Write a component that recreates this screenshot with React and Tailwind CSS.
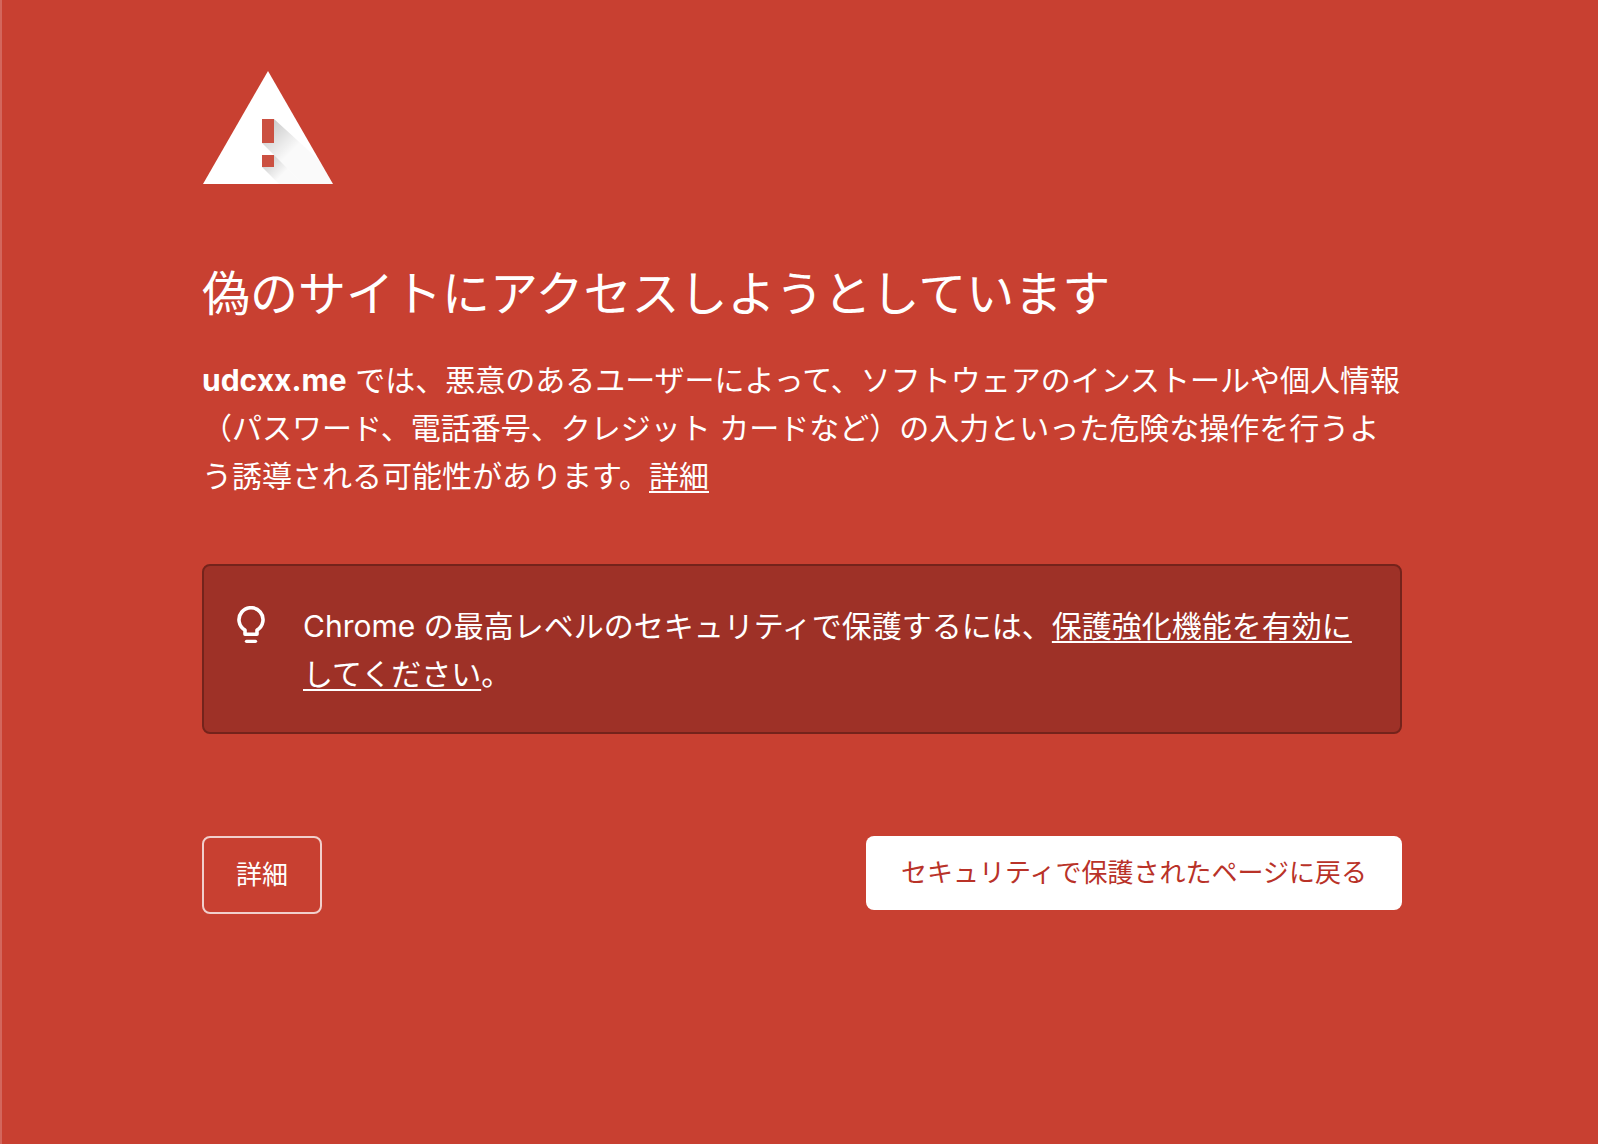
const FONT = { fontFamily: 'Inter, "Noto Sans CJK JP", sans-serif' };

function WarningIcon() {
  return (
    <svg viewBox="0 0 132 113" className="block w-[132px]" aria-hidden="true">
      <defs>
        <linearGradient id="upper-shade" gradientUnits="userSpaceOnUse" x1="64" y1="58" x2="88" y2="82">
          <stop offset="0" stopColor="#000" stopOpacity="0.2" />
          <stop offset="1" stopColor="#000" stopOpacity="0.02" />
        </linearGradient>
        <linearGradient id="lower-shade" gradientUnits="userSpaceOnUse" x1="64" y1="88" x2="80" y2="104">
          <stop offset="0" stopColor="#000" stopOpacity="0.2" />
          <stop offset="1" stopColor="#000" stopOpacity="0.02" />
        </linearGradient>
      </defs>
      <path d="M66 0 131 113H1z" fill="#fff" />
      <path d="M72 48 117 89 131 113H101L60 72 72 72z" fill="url(#upper-shade)" />
      <path d="M72 84 101 113H77L60 96 72 96z" fill="url(#lower-shade)" />
      <path d="M60 48h12v24H60zM60 84h12v12H60z" fill="#cb5041" />
    </svg>
  );
}

function BulbIcon() {
  return (
    <svg viewBox="0 0 28 38" className="mt-1 block w-7 shrink-0 self-start" fill="none" stroke="#fff" strokeWidth="3.6" aria-hidden="true">
      <path d="M8 28.200V24.100a12 12 0 1 1 12 0v4.100z" strokeLinejoin="round" />
      <path d="M9.500 35.300h9" strokeWidth="3.300" strokeLinecap="round" />
    </svg>
  );
}

export default function App() {
  return (
    <main lang="ja" style={FONT} className="min-h-screen border-l-2 border-[#d3665c] bg-[#c84031] pt-[71px] pb-16 pl-1 text-white">
      <div className="mx-auto max-w-[1200px]">
        <WarningIcon />
        <h1 className="mt-[74px] text-[48px] leading-[72px]">偽のサイトにアクセスしようとしています</h1>
        <p className="mt-[26px] text-[30px] leading-[48px]">
          <strong>udcxx.me</strong> では、悪意のあるユーザーによって、ソフトウェアのインストールや個人情報（パスワード、電話番号、クレジット カードなど）の入力といった危険な操作を行うよう誘導される可能性があります。<a href="#details" className="underline decoration-2 underline-offset-4">詳細</a>
        </p>
        <section className="mt-16 flex gap-[38px] rounded-lg border-2 border-[#74231b] bg-[#9e3127] pt-9 pr-8 pb-[34px] pl-[33px]">
          <BulbIcon />
          <p className="text-[30px] leading-[48px]">
            Chrome の最高レベルのセキュリティで保護するには、<a href="#protection" className="underline decoration-2 underline-offset-4">保護強化機能を有効にしてください</a>。
          </p>
        </section>
        <div className="mt-[102px] flex items-start justify-between">
          <button type="button" className="rounded-lg border-2 border-[#f1cfcc] px-8 py-4 text-[26px] leading-[42px]">詳細</button>
          <button type="button" className="rounded-lg bg-white px-[35px] py-4 text-[26px] leading-[42px] text-[#b93228]">セキュリティで保護されたページに戻る</button>
        </div>
      </div>
    </main>
  );
}
